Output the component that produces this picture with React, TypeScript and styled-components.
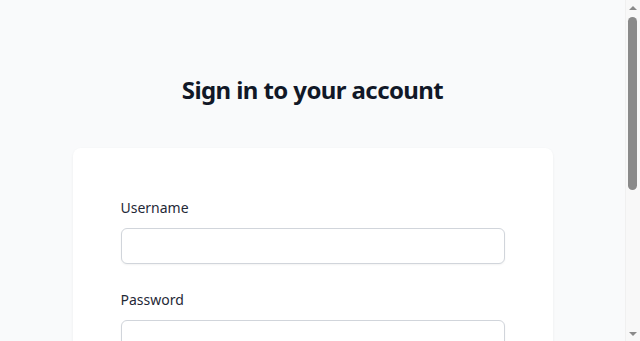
import React from 'react';
import styled, { createGlobalStyle } from 'styled-components';

const GlobalStyle = createGlobalStyle`
    html, body {
        margin: 0;
        padding: 0;
        background-color: #f9fafb;
        font-family: "Noto Sans", "Open Sans", sans-serif;
        color: #111827;
    }
    * {
        box-sizing: border-box;
    }
`

const Page = styled.div`
    display: flex;
    flex-direction: column;
    padding: 48px 15px 48px 0;
`

const Heading = styled.h2`
    margin: 24px 0 0 0;
    text-align: center;
    font-size: 24px;
    line-height: 36px;
    font-weight: 700;
    letter-spacing: -0.025em;
    color: #111827;
`

const Card = styled.div`
    margin: 40px auto 0 auto;
    width: 100%;
    max-width: 480px;
    background-color: #ffffff;
    padding: 48px;
    border-radius: 8px;
    box-shadow: 0 1px 3px 0 rgba(0, 0, 0, 0.06), 0 1px 2px -1px rgba(0, 0, 0, 0.06);
`

const Form = styled.form`
    display: flex;
    flex-direction: column;
    gap: 24px;
`

const Field = styled.div`
    display: flex;
    flex-direction: column;
`

const Label = styled.label`
    display: block;
    font-size: 14px;
    line-height: 24px;
    font-weight: 400;
    color: #1f2937;
`

const Input = styled.input`
    margin-top: 8px;
    display: block;
    width: 100%;
    height: 36px;
    border-radius: 6px;
    border: 1px solid #d1d5db;
    padding: 6px 12px;
    font-size: 14px;
    font-family: inherit;
    color: #111827;
    background: #ffffff;
    box-shadow: 0 1px 2px 0 rgba(0, 0, 0, 0.05);
    outline: none;
`

const Row = styled.div`
    display: flex;
    align-items: center;
    justify-content: space-between;
`

const CheckWrap = styled.div`
    display: flex;
    align-items: center;
    gap: 12px;
`

const Check = styled.input`
    width: 16px;
    height: 16px;
    margin: 0;
`

const SmallText = styled.span`
    font-size: 14px;
    line-height: 24px;
    color: #111827;
`

const Link = styled.a`
    font-size: 14px;
    line-height: 24px;
    font-weight: 600;
    color: #4f46e5;
    text-decoration: none;
`

const Button = styled.button`
    width: 100%;
    height: 36px;
    border: none;
    border-radius: 6px;
    background-color: #4f46e5;
    color: #ffffff;
    font-family: inherit;
    font-size: 14px;
    font-weight: 600;
    box-shadow: 0 1px 2px 0 rgba(0, 0, 0, 0.05);
`

const Footer = styled.p`
    margin: 40px 0 0 0;
    text-align: center;
    font-size: 14px;
    line-height: 24px;
    color: #6b7280;
`

/* classic browser scrollbar drawn over the right edge */
const ScrollRail = styled.div`
    position: fixed;
    top: 0;
    right: 0;
    bottom: 0;
    width: 15px;
    display: flex;
    flex-direction: column;
    background-color: #f8f8f8;
    border-left: 1px solid #f0f0f0;
`

const ScrollArrow = styled.div<{ $down?: boolean }>`
    height: 15px;
    display: flex;
    align-items: center;
    justify-content: center;
    &::before {
        content: '';
        width: 0;
        height: 0;
        border-left: 4px solid transparent;
        border-right: 4px solid transparent;
        ${(p) => p.$down ? 'border-top: 4px solid #8a8a8a;' : 'border-bottom: 4px solid #8a8a8a;'}
    }
`

const ScrollTrack = styled.div`
    flex: 1;
    padding: 2px 3px 0 2px;
`

const ScrollThumb = styled.div`
    height: 173px;
    border-radius: 5px;
    background-color: #8a8a8a;
`

const App = () => {
    return (
        <>
            <GlobalStyle />
            <Page>
                <Heading>Sign in to your account</Heading>
                <Card>
                    <Form onSubmit={(e) => e.preventDefault()}>
                        <Field>
                            <Label htmlFor="username">Username</Label>
                            <Input id="username" name="username" type="text" />
                        </Field>
                        <Field>
                            <Label htmlFor="password">Password</Label>
                            <Input id="password" name="password" type="password" />
                        </Field>
                        <Row>
                            <CheckWrap>
                                <Check type="checkbox" id="remember" />
                                <SmallText>Remember me</SmallText>
                            </CheckWrap>
                            <Link href="#">Forgot password?</Link>
                        </Row>
                        <Button type="submit">Sign in</Button>
                    </Form>
                </Card>
                <Footer>
                    Not a member? <Link href="#">Create an account</Link>
                </Footer>
            </Page>
            <ScrollRail>
                <ScrollArrow />
                <ScrollTrack>
                    <ScrollThumb />
                </ScrollTrack>
                <ScrollArrow $down />
            </ScrollRail>
        </>
    )
}

export default App
